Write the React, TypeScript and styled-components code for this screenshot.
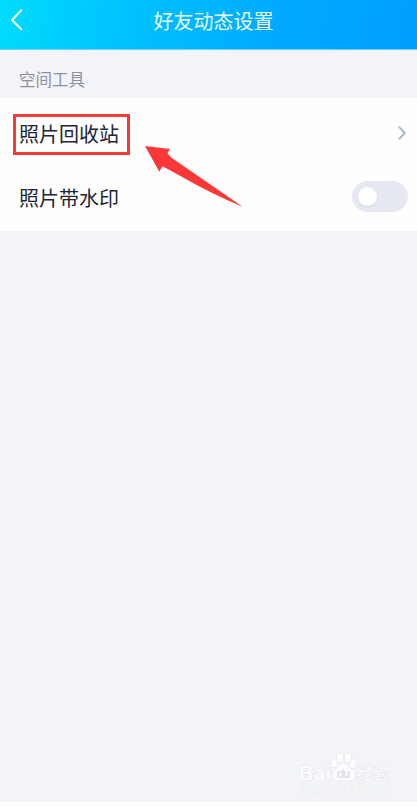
import React from "react";
import styled, { createGlobalStyle } from "styled-components";

const GlobalStyle = createGlobalStyle`
  * { box-sizing: border-box; }
  body {
    margin: 0;
    background: #fdfdfe;
    font-family: "Noto Sans CJK SC", "Noto Sans", sans-serif;
  }
`;

const Screen = styled.main`
  height: 802px;
  display: flex;
  flex-direction: column;
  background: #f3f4f9;
`;

const Header = styled.header`
  position: relative;
  height: 50px;
  flex: none;
  display: flex;
  justify-content: center;
  padding: 0 0 7px 10px;
  align-items: center;
  background: linear-gradient(100deg, #00dcfc 0%, #00c0ff 33%, #00aaff 66%, #009eff 100%);
  border-bottom: 1px solid #6fd0ff;
`;

const BackButton = styled.button`
  position: absolute;
  left: 8px;
  top: 6px;
  width: 18px;
  height: 28px;
  padding: 0;
  border: 0;
  background: none;
  svg { display: block; }
`;

const Title = styled.h1`
  margin: 0;
  font-size: 20px;
  line-height: 30px;
  font-weight: 400;
  color: #e9faff;
`;

const SectionLabel = styled.h2`
  margin: 0;
  height: 48px;
  padding: 17px 19px 0;
  font-size: 16.5px;
  line-height: 24px;
  font-weight: 400;
  color: #8c919f;
`;

const List = styled.section`
  height: 133px;
  background: #fefefe;
`;

const Row = styled.div<{ $height: number }>`
  height: ${(p) => p.$height}px;
  display: flex;
  align-items: center;
  justify-content: space-between;
  padding: 0 9px 0 13px;
`;

const RowLabel = styled.span<{ $marked?: boolean }>`
  height: 41px;
  width: 117px;
  border: 3px solid ${(p) => (p.$marked ? "#fb3838" : "transparent")};
  padding-left: 3px;
  font-size: 20px;
  line-height: 34px;
  white-space: nowrap;
  color: #202536;
`;

const Chevron = styled.svg`
  margin: 0 0 4px;
`;

const Switch = styled.span`
  width: 56px;
  height: 31px;
  margin-bottom: 5px;
  padding-left: 6px;
  display: flex;
  align-items: center;
  border-radius: 16px;
  background: #e6e9f2;
`;

const Knob = styled.span`
  width: 19px;
  height: 19px;
  border-radius: 50%;
  background: #fff;
  box-shadow: 0 1px 2px rgba(120, 130, 160, 0.18);
`;

const Pointer = styled.svg`
  position: absolute;
  left: 140px;
  top: 140px;
`;

const Watermark = styled.svg`
  position: absolute;
  left: 290px;
  top: 745px;
`;

export default function App() {
  return (
    <>
      <GlobalStyle />
      <Screen>
        <Header>
          <BackButton aria-label="返回">
            <svg width="18" height="28" viewBox="0 0 18 28" fill="none">
              <path d="M13.3 4.3 4 14l9.3 9.3" stroke="#fff" strokeWidth="2" strokeLinecap="round" strokeLinejoin="round" />
            </svg>
          </BackButton>
          <Title>好友动态设置</Title>
        </Header>
        <SectionLabel>空间工具</SectionLabel>
        <List>
          <Row $height={73}>
            <RowLabel $marked>照片回收站</RowLabel>
            <Chevron width="10" height="16" viewBox="0 0 10 16" fill="none">
              <path d="M1.3 2.2 6.8 8l-5.5 5.8" stroke="#acb9c5" strokeWidth="1.9" strokeLinecap="round" strokeLinejoin="round" />
            </Chevron>
          </Row>
          <Row $height={55}>
            <RowLabel>照片带水印</RowLabel>
            <Switch role="switch" aria-checked="false">
              <Knob />
            </Switch>
          </Row>
        </List>
      </Screen>
      <Pointer width="110" height="72" viewBox="0 0 110 72">
        <path d="M5 6 30 9 27.4 13.5 Q31 18 37 21.5 L103 67 Q70 53 44 38 L24 27 22.3 26.5 19.3 31.7 Z" transform="translate(0 0)" fill="#fb3838" />
      </Pointer>
      <Watermark width="127" height="61" viewBox="0 0 127 61">
        <g fill="#fcfcfd" stroke="#e3e5ea" strokeWidth="1" paintOrder="stroke">
          <text x="9" y="34.5" fontFamily="Liberation Sans, sans-serif" fontSize="20" fontWeight="700" textLength="32">Bai</text>
          <ellipse cx="44" cy="18" rx="3.3" ry="4.4" transform="rotate(-15 44 18)" />
          <ellipse cx="50" cy="12" rx="3.4" ry="4.6" />
          <ellipse cx="58" cy="12.5" rx="3.3" ry="4.6" transform="rotate(10 58 12.5)" />
          <ellipse cx="63" cy="19" rx="3" ry="4.2" transform="rotate(20 63 19)" />
          <path d="M53 18.5c-4 0-5 4-8 6.5-3.500 3-4 9 1 10.500 3 .8 5-.3 8-.3s6 1.200 8.500.1c4.500-2 3-7.500 0-10-3.500-3-4.500-6.800-9.500-6.800Z" />
          <text x="67" y="34" fontFamily="Noto Sans CJK SC, sans-serif" fontSize="15.500" fontWeight="500" textLength="31">经验</text>
          <text x="11" y="46.500" fontFamily="Liberation Sans, sans-serif" fontSize="11" textLength="88" strokeWidth="0.7">jingyan.baidu.com</text>
        </g>
        <text x="46.500" y="33" fontFamily="Liberation Sans, sans-serif" fontSize="13" fontWeight="700" fill="#dfe2e8" textLength="14">du</text>
      </Watermark>
    </>
  );
}
